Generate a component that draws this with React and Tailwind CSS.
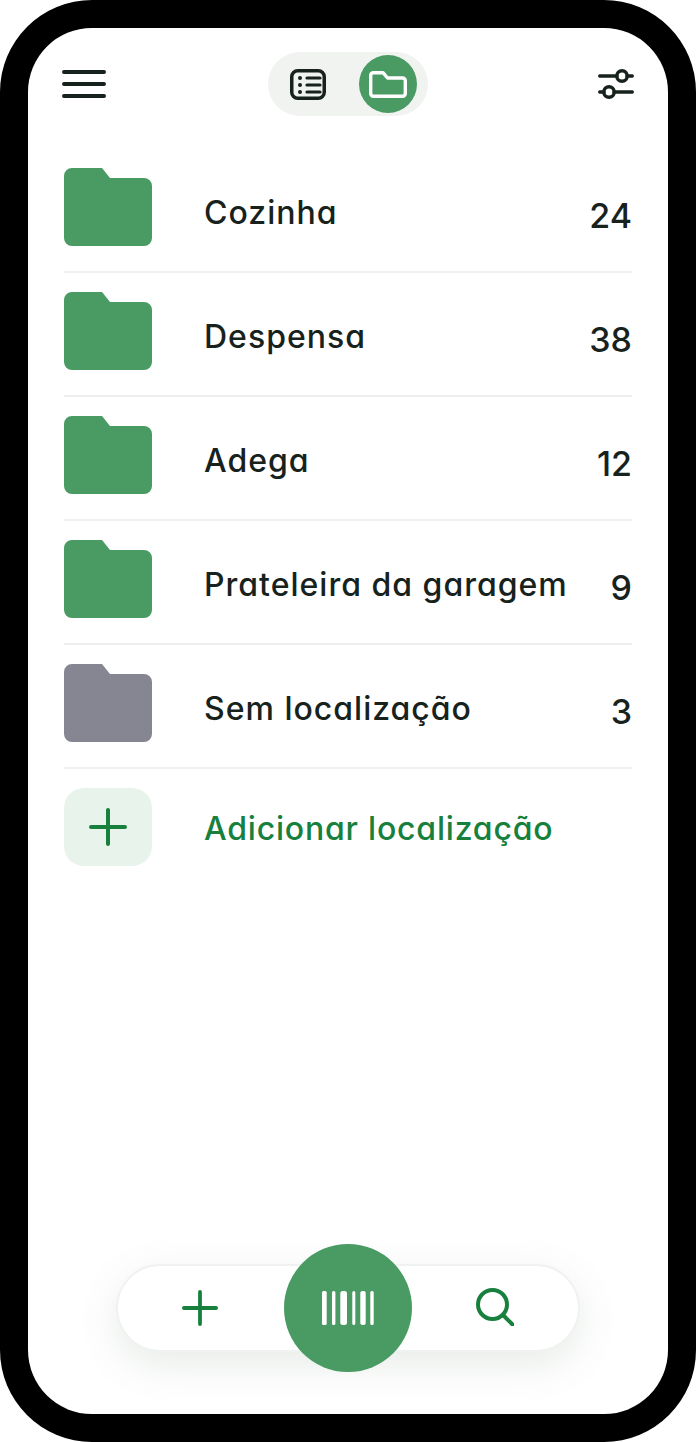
const locations = [
  { name: "Cozinha", count: 24, color: "text-[#499a63]" },
  { name: "Despensa", count: 38, color: "text-[#499a63]" },
  { name: "Adega", count: 12, color: "text-[#499a63]" },
  { name: "Prateleira da garagem", count: 9, color: "text-[#499a63]" },
  { name: "Sem localização", count: 3, color: "text-[#868692]" },
]

function FolderShape({ className }) {
  return (
    <svg viewBox="0 0 88 78" className={className} fill="currentColor">
      <path d="M8 0H38L46 10H80A8 8 0 0 1 88 18V70A8 8 0 0 1 80 78H8A8 8 0 0 1 0 70V8A8 8 0 0 1 8 0Z" />
    </svg>
  )
}

function PlusIcon({ className }) {
  return (
    <svg viewBox="0 0 38 38" className={className} fill="none" stroke="#17803d" strokeWidth="4" strokeLinecap="round">
      <path d="M2 19H36M19 2V36" />
    </svg>
  )
}

function Row({ name, count, color }) {
  return (
    <div className="h-[124px] pt-[19px] border-b-2 border-[#eef0ef] flex items-start">
      <FolderShape className={`w-[88px] h-[78px] shrink-0 ${color}`} />
      <span className="ml-[52px] mt-[20px] text-[32px] leading-[50px] font-medium tracking-[1px]">{name}</span>
      <span className="ml-auto mt-[23px] text-[34px] leading-[50px] font-medium">{count}</span>
    </div>
  )
}

function Barcode() {
  return (
    <svg viewBox="0 0 52 34" className="w-[52px] h-[34px]" fill="#fff">
      <rect x="0" y="0" width="4.7" height="34" rx="1.5" />
      <rect x="10" y="0" width="3.4" height="34" rx="1.5" />
      <rect x="18.3" y="0" width="6.7" height="34" rx="2.5" />
      <rect x="30.3" y="0" width="3" height="34" rx="1.5" />
      <rect x="38.3" y="0" width="5.4" height="34" rx="2" />
      <rect x="48.3" y="0" width="3.4" height="34" rx="1.5" />
    </svg>
  )
}

export default function App() {
  return (
    <div className="w-[696px] h-[1442px] bg-white">
      <div className="w-full h-full rounded-[92px] bg-black p-[28px]">
        <div className="relative w-full h-full rounded-[64px] bg-white flex flex-col px-[36px] text-[#17221d] font-['Inter',sans-serif] [font-feature-settings:'cv11']">
          <header className="h-[112px] pt-[24px] grid grid-cols-[1fr_auto_1fr] items-start">
            <svg viewBox="0 0 44 28" className="w-[44px] h-[28px] ml-[-2px] mt-[18px]" stroke="#17221d" strokeWidth="4" strokeLinecap="round">
              <path d="M2 2H42M2 14H42M2 26H42" />
            </svg>
            <div className="w-[160px] h-[64px] rounded-full bg-[#f1f3f1] flex items-center pl-[22px] pr-[11px] justify-between">
              <svg viewBox="0 0 36 31" className="w-[36px] h-[31px]" fill="none" stroke="#17221d" strokeWidth="3.5" strokeLinecap="round">
                <rect x="1.75" y="1.75" width="32.5" height="27.5" rx="6" />
                <path d="M17 9H30M17 16H30M17 23H30" strokeWidth="3.2" />
                <circle cx="10" cy="9" r="2" fill="#17221d" stroke="none" />
                <circle cx="10" cy="16" r="2" fill="#17221d" stroke="none" />
                <circle cx="10" cy="23" r="2" fill="#17221d" stroke="none" />
              </svg>
              <div className="w-[58px] h-[58px] rounded-full bg-[#499a63] flex items-center justify-center">
                <svg viewBox="0 0 38 27" className="w-[38px] h-[27px]" fill="none" stroke="#fff" strokeWidth="3.4" strokeLinejoin="round">
                  <path d="M4 1.7H14L18.5 7H33.5A2.8 2.8 0 0 1 36.3 9.8V22.5A2.8 2.8 0 0 1 33.5 25.3H4.5A2.8 2.8 0 0 1 1.7 22.5V4A2.8 2.8 0 0 1 4 1.7Z" />
                </svg>
              </div>
            </div>
            <svg viewBox="0 0 36 30" className="w-[36px] h-[30px] justify-self-end mr-[-2px] mt-[17px]" fill="none" stroke="#17221d" strokeWidth="3.4" strokeLinecap="round">
              <path d="M1.7 7H19M29 7H34.3M1.7 23H6M16 23H34.3" />
              <circle cx="24" cy="7" r="5.2" />
              <circle cx="11" cy="23" r="5.2" />
            </svg>
          </header>

          <div className="mt-[9px]">
            {locations.map((l) => (
              <Row key={l.name} {...l} />
            ))}
          </div>

          <div className="mt-[19px] flex items-center">
            <div className="w-[88px] h-[78px] rounded-[20px] bg-[#e8f3ec] flex items-center justify-center">
              <PlusIcon className="w-[38px] h-[38px]" />
            </div>
            <span className="ml-[52px] mt-[4px] text-[32px] leading-[50px] font-medium tracking-[0.8px] text-[#17803d]">Adicionar localização</span>
          </div>

          <div className="mt-auto mb-[62px] relative mx-[52px] h-[88px] rounded-full bg-white border-2 border-[#eff2ef] shadow-[0_12px_40px_rgba(60,100,70,0.13)] flex items-center justify-between pl-[64px] pr-[64px]">
            <PlusIcon className="w-[36px] h-[36px]" />
            <svg viewBox="0 0 38 38" className="w-[38px] h-[38px] mt-[-2px]" fill="none" stroke="#17803d" strokeWidth="4" strokeLinecap="round">
              <circle cx="16.5" cy="16.5" r="14.5" />
              <path d="M27 27L36.5 36.5" />
            </svg>
            <div className="absolute left-[166px] top-[-22px] w-[128px] h-[128px] rounded-full bg-[#499a63] flex items-center justify-center">
              <Barcode />
            </div>
          </div>
        </div>
      </div>
    </div>
  )
}
